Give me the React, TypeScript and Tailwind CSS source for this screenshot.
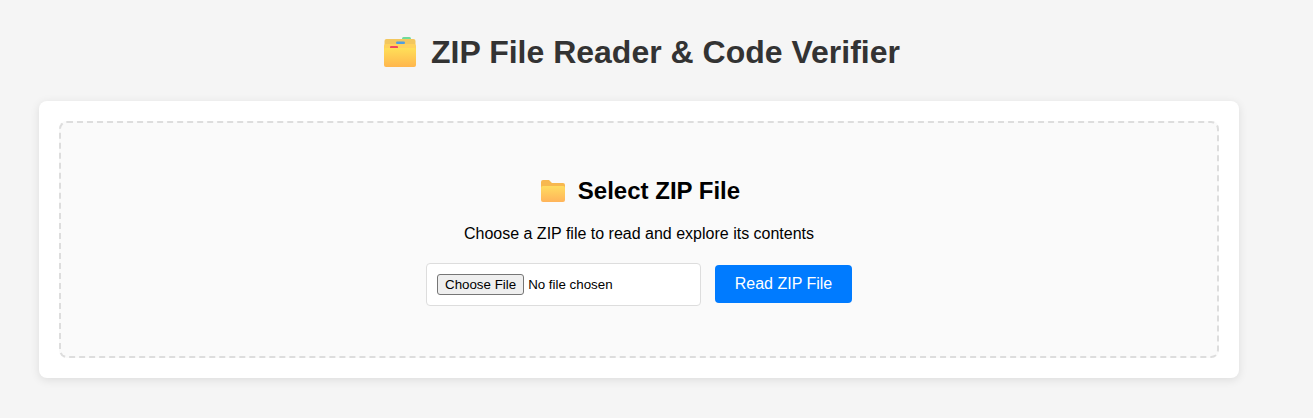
function StackedFolderIcon() {
  return (
    <svg width="34" height="33" viewBox="0 0 34 33" className="shrink-0">
      <defs>
        <linearGradient id="stackFront" x1="0" y1="0" x2="0" y2="1">
          <stop offset="0" stopColor="#ffdf58" />
          <stop offset="1" stopColor="#ffb64d" />
        </linearGradient>
      </defs>
      <rect x="19" y="1" width="9" height="3" rx="1.5" fill="#6fdc9a" />
      <rect x="1.5" y="3" width="31" height="12" rx="2" fill="#f3c75e" />
      <rect x="13" y="5.5" width="9" height="2.5" rx="1.2" fill="#4f9fe0" />
      <rect x="1" y="8" width="32" height="10" rx="2" fill="#ffd25c" />
      <rect x="7" y="10" width="8" height="2.5" rx="1" fill="#f2475c" />
      <rect x="1" y="12" width="32" height="19" rx="2" fill="url(#stackFront)" />
    </svg>
  );
}

function FolderIcon() {
  return (
    <svg width="26" height="22" viewBox="0 0 26 22" className="shrink-0">
      <defs>
        <linearGradient id="folderFront" x1="0" y1="0" x2="0" y2="1">
          <stop offset="0" stopColor="#ffdc60" />
          <stop offset="1" stopColor="#ffb45a" />
        </linearGradient>
      </defs>
      <path d="M1 2a2 2 0 0 1 2-2h6l3 3h11a2 2 0 0 1 2 2v4H1z" fill="#f7b84f" />
      <rect x="1" y="6" width="24" height="16" rx="2" fill="url(#folderFront)" />
    </svg>
  );
}

export default function App() {
  return (
    <div className="min-h-[418px] bg-[#f5f5f5] pl-[39px] pt-[34px] font-['Liberation_Sans',Arial,sans-serif] text-black">
      <div className="w-[1200px]">
        <h1 className="flex items-center justify-center gap-[14px] pl-[5px] text-[32px] leading-[37px] font-bold text-[#333]">
          <StackedFolderIcon />
          ZIP File Reader &amp; Code Verifier
        </h1>

        <div className="mt-[30px] rounded-lg bg-white p-5 shadow-[0_2px_10px_rgba(0,0,0,0.1)]">
          <div className="flex h-[237px] flex-col items-center rounded-lg border-2 border-dashed border-[#ddd] bg-[#fafafa] pt-[54px]">
            <h3 className="flex items-center gap-3 pl-[2px] text-2xl leading-7 font-bold">
              <FolderIcon />
              Select ZIP File
            </h3>
            <p className="mt-[20px] text-base leading-[18px]">Choose a ZIP file to read and explore its contents</p>
            <div className="mt-[20px] flex items-start gap-[14px]">
              <input
                type="file"
                accept=".zip"
                className="h-[43px] w-[275px] rounded border border-[#ddd] bg-white p-[10px] text-[13.33px] file:mr-1 file:h-[21px] file:rounded-[3px] file:border file:border-solid file:border-[#767676] file:bg-[#efefef] file:px-[7px] file:text-[13.33px]"
              />
              <button className="mt-[2px] w-[137px] rounded bg-[#007bff] py-[10px] text-base leading-[18px] text-white">
                Read ZIP File
              </button>
            </div>
          </div>
        </div>
      </div>
    </div>
  );
}
